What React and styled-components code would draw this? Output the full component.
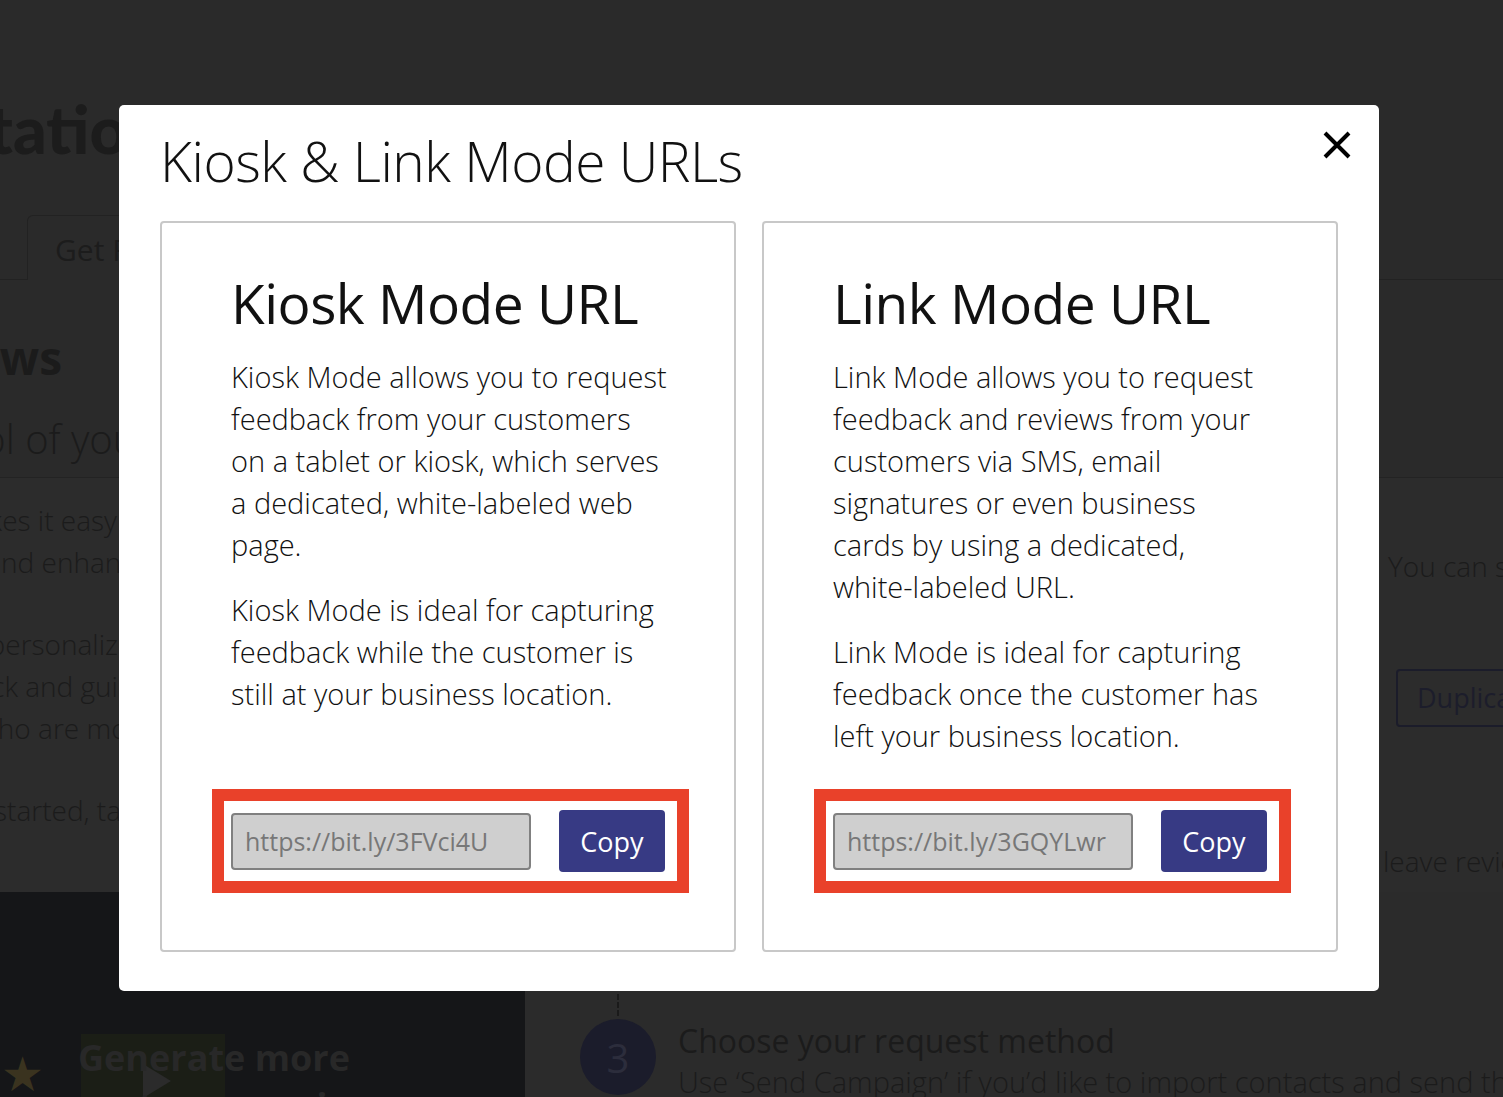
import styled, { createGlobalStyle } from "styled-components"

const GlobalStyle = createGlobalStyle`
  html, body {
    margin: 0;
    padding: 0;
  }
  body {
    background: #2a2a2a;
    font-family: "Open Sans", "Liberation Sans", sans-serif;
    overflow: hidden;
  }
  * {
    box-sizing: border-box;
  }
`

// lines are kept as in the original layout of the dialog
const modes = [
  {
    id: "kiosk",
    title: "Kiosk Mode URL",
    paragraphs: [
      ["Kiosk Mode allows you to request", "feedback from your customers", "on a tablet or kiosk, which serves", "a dedicated, white-labeled web", "page."],
      ["Kiosk Mode is ideal for capturing", "feedback while the customer is", "still at your business location."],
    ],
    url: "https://bit.ly/3FVci4U",
  },
  {
    id: "link",
    title: "Link Mode URL",
    paragraphs: [
      ["Link Mode allows you to request", "feedback and reviews from your", "customers via SMS, email", "signatures or even business", "cards by using a dedicated,", "white-labeled URL."],
      ["Link Mode is ideal for capturing", "feedback once the customer has", "left your business location."],
    ],
    url: "https://bit.ly/3GQYLwr",
  },
]

export default function App() {

  function copiar(url) {
    if (navigator.clipboard) navigator.clipboard.writeText(url).catch(() => {})
  }

  return (
    <>
      <GlobalStyle />
      {/* page behind the modal, already dimmed by the backdrop */}
      <Page>
        <Masthead>
          <BigTitle>Reputation</BigTitle>
        </Masthead>
        <TabBar>
          <Tab>Get Reviews</Tab>
        </TabBar>
        <IntroHead>
          <LeftCol>
            <SectionTitle $end={62}>Reviews</SectionTitle>
            <SectionLead $end={152}>Take control of your</SectionLead>
          </LeftCol>
        </IntroHead>
        <IntroBody>
          <LeftCol>
            <BgPara>
              <BgLine $end={150}>Reputation makes it easy to</BgLine>
              <BgLine $end={150}>collect and enhance</BgLine>
            </BgPara>
            <BgPara>
              <BgLine $end={150}>Send personalized</BgLine>
              <BgLine $end={150}>feedback and guide</BgLine>
              <BgLine $end={150}>those who are most</BgLine>
            </BgPara>
            <BgPara>
              <BgLine $end={150}>To get started, take</BgLine>
            </BgPara>
          </LeftCol>
          <RightCol>
            <RightText>You can send</RightText>
            <GhostButton>Duplicate</GhostButton>
            <RightText $shift={-5} $gap={113}>leave reviews</RightText>
          </RightCol>
        </IntroBody>
        <Lower>
          <PromoPanel>
            <Star>★</Star>
            <Video>
              <Thumb>
                <Play />
              </Thumb>
              <PromoTitle>Generate more<br />customer reviews</PromoTitle>
            </Video>
          </PromoPanel>
          <StepsPanel>
            <Connector />
            <Step>
              <StepNumber>3</StepNumber>
              <div>
                <StepTitle>Choose your request method</StepTitle>
                <StepText>Use ‘Send Campaign’ if you’d like to import contacts and send them a request</StepText>
              </div>
            </Step>
          </StepsPanel>
        </Lower>
      </Page>

      <Overlay>
        <Modal>
          <ModalHeader>
            <ModalTitle>Kiosk &amp; Link Mode URLs</ModalTitle>
            <CloseButton aria-label="Close">
              <svg width="28" height="28" viewBox="0 0 28 28">
                <path d="M2 2 L26 26 M26 2 L2 26" stroke="#000" strokeWidth="4" />
              </svg>
            </CloseButton>
          </ModalHeader>
          <Cards>
            {modes.map((m) => (
              <Card key={m.id}>
                <CardTitle>{m.title}</CardTitle>
                {m.paragraphs.map((lines, i) => (
                  <CardText key={i}>
                    {lines.map((l, j) => (
                      <span key={j}>{l}{j < lines.length - 1 && <br />}</span>
                    ))}
                  </CardText>
                ))}
                <UrlBox>
                  <UrlInput readOnly value={m.url} />
                  <CopyButton onClick={() => copiar(m.url)}>Copy</CopyButton>
                </UrlBox>
              </Card>
            ))}
          </Cards>
        </Modal>
      </Overlay>
    </>
  )
}

/* ---------- background page ---------- */

const Page = styled.div`
  height: 100vh;
  overflow: hidden;
  display: flex;
  flex-direction: column;
  color: #1b1b1b;
  & > * {
    flex-shrink: 0;
  }
`
const Masthead = styled.div`
  height: 215px;
  padding-top: 96px;
  display: flex;
  width: 165px;
  justify-content: flex-end;
`
const BigTitle = styled.h1`
  margin: 0;
  font-family: Lato, "Open Sans", sans-serif;
  font-weight: 900;
  font-size: 66px;
  line-height: 1;
  white-space: nowrap;
  color: #1c1c1c;
`
const TabBar = styled.div`
  height: 65px;
  padding-left: 27px;
  border-bottom: 1px solid #222;
  display: flex;
  align-items: flex-end;
`
const Tab = styled.div`
  height: 65px;
  margin-bottom: -1px;
  width: 320px;
  padding: 2px 0 0 27px;
  border: 1px solid #222;
  border-bottom: none;
  border-radius: 6px 6px 0 0;
  background: #2a2a2a;
  font-size: 30px;
  line-height: 64px;
  color: #1c1c1c;
`
const IntroHead = styled.div`
  height: 198px;
  border-bottom: 1px solid #232323;
  display: flex;
`
const LeftCol = styled.div`
  display: flex;
  flex-direction: column;
`
const Ended = styled.div`
  display: flex;
  justify-content: flex-end;
  white-space: nowrap;
  width: ${(p) => p.$end}px;
`
const SectionTitle = styled(Ended)`
  margin-top: 52px;
  font-weight: 700;
  font-size: 46px;
  line-height: 50px;
`
const SectionLead = styled(Ended)`
  margin-top: 32px;
  font-weight: 300;
  font-size: 40px;
  line-height: 50px;
`
const IntroBody = styled.div`
  height: 414px;
  display: flex;
  justify-content: space-between;
  background: #2c2c2c;
`
const BgPara = styled.div`
  margin-top: 40px;
  &:first-child {
    margin-top: 21px;
  }
`
const BgLine = styled(Ended)`
  font-weight: 300;
  font-size: 28px;
  line-height: 42px;
`
const RightCol = styled.div`
  width: 115px;
  display: flex;
  flex-direction: column;
  white-space: nowrap;
`
const RightText = styled.div`
  margin-top: ${(p) => p.$gap || 67}px;
  margin-left: ${(p) => p.$shift || 0}px;
  font-weight: 300;
  font-size: 28px;
  line-height: 42px;
`
const GhostButton = styled.div`
  margin-top: 82px;
  margin-left: 8px;
  width: 180px;
  height: 58px;
  border: 2px solid #1b1c2a;
  border-radius: 4px;
  padding-left: 19px;
  font-size: 27px;
  line-height: 54px;
  color: #1c1d2b;
`
const Lower = styled.div`
  flex: 1 1 0;
  min-height: 0;
  overflow: hidden;
  display: flex;
`
const PromoPanel = styled.div`
  width: 525px;
  flex-shrink: 0;
  background: #151618;
  display: flex;
  align-items: flex-start;
  padding: 142px 0 0 1px;
  gap: 34px;
`
const Star = styled.div`
  margin-top: 16px;
  font-family: "DejaVu Sans", sans-serif;
  font-size: 48px;
  line-height: 1;
  color: #3a331f;
`
const Video = styled.div`
  display: grid;
`
const Thumb = styled.div`
  grid-area: 1 / 1;
  width: 144px;
  height: 90px;
  margin: 0 0 0 3px;
  background: #1b1e16;
  padding: 30px 0 0 62px;
`
const Play = styled.div`
  width: 0;
  height: 0;
  border-top: 17px solid transparent;
  border-bottom: 17px solid transparent;
  border-left: 28px solid #2b2b2b;
`
const PromoTitle = styled.div`
  grid-area: 1 / 1;
  font-weight: 700;
  font-size: 36px;
  line-height: 48px;
  color: #282828;
  white-space: nowrap;
`
const StepsPanel = styled.div`
  flex: 1;
  min-width: 0;
  overflow: hidden;
  background: #2b2b2b;
  padding: 102px 0 0 55px;
`
const Connector = styled.div`
  margin-left: 37px;
  height: 22px;
  border-left: 2px dashed #1a1a1a;
`
const Step = styled.div`
  margin-top: 3px;
  display: flex;
  gap: 22px;
  white-space: nowrap;
`
const StepNumber = styled.div`
  width: 76px;
  height: 76px;
  flex-shrink: 0;
  border-radius: 50%;
  background: #1b1c2b;
  color: #2c2d3c;
  font-size: 40px;
  display: flex;
  align-items: center;
  justify-content: center;
`
const StepTitle = styled.div`
  font-size: 32px;
  line-height: 44px;
  color: #1b1b1b;
`
const StepText = styled.div`
  font-weight: 300;
  font-size: 29px;
  line-height: 38px;
  color: #1b1b1b;
`

/* ---------- modal ---------- */

const Overlay = styled.div`
  position: fixed;
  inset: 0;
  padding: 105px 0 0 119px;
`
const Modal = styled.div`
  width: 1260px;
  height: 886px;
  background: #fff;
  border-radius: 5px;
  padding: 21px 41px 39px;
  display: flex;
  flex-direction: column;
`
const ModalHeader = styled.div`
  display: flex;
  justify-content: space-between;
  align-items: flex-start;
  margin-bottom: 26px;
`
const ModalTitle = styled.h2`
  margin: 0;
  font-weight: 300;
  font-size: 55px;
  letter-spacing: -0.5px;
  line-height: 68px;
  padding-top: 1px;
  color: #111;
`
const CloseButton = styled.button`
  margin: 5px -13px 0 0;
  padding: 0;
  border: none;
  background: none;
  width: 28px;
  height: 28px;
  display: flex;
  cursor: pointer;
`
const Cards = styled.div`
  flex: 1;
  display: grid;
  grid-template-columns: repeat(2, minmax(0, 1fr));
  gap: 26px;
`
const Card = styled.div`
  border: 2px solid #c8c8c8;
  border-radius: 4px;
  padding: 47px 40px 57px 69px;
  display: flex;
  flex-direction: column;
`
const CardTitle = styled.h3`
  margin: 0 0 20px;
  font-weight: 400;
  font-size: 55px;
  letter-spacing: -0.5px;
  line-height: 66px;
  color: #111;
`
const CardText = styled.p`
  margin: 0 0 23px;
  font-weight: 300;
  font-size: 29px;
  line-height: 42px;
  color: #111;
  white-space: nowrap;
`
const UrlBox = styled.div`
  margin: auto 0 0 -19px;
  width: 477px;
  height: 104px;
  flex-shrink: 0;
  border: 12px solid #e9412a;
  padding: 0 12px 0 7px;
  display: flex;
  align-items: center;
  gap: 28px;
`
const UrlInput = styled.input`
  width: 300px;
  height: 57px;
  background: #cfcfcf;
  border: 2px solid #808080;
  border-radius: 4px;
  padding: 0 12px;
  font-family: "Open Sans", sans-serif;
  font-size: 25px;
  color: #777;
  outline: none;
`
const CopyButton = styled.button`
  width: 106px;
  height: 62px;
  border: none;
  border-radius: 4px;
  background: #373a84;
  color: #fff;
  font-family: "Open Sans", sans-serif;
  font-size: 27px;
  cursor: pointer;
`
